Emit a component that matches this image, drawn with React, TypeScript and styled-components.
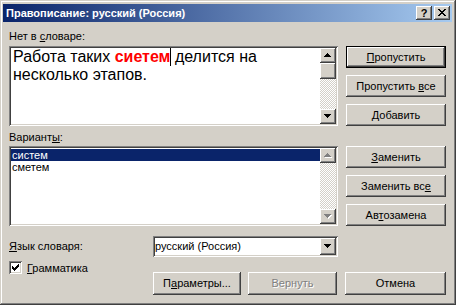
import React from 'react';
import styled, { createGlobalStyle } from 'styled-components';

const FACE = '#d4d0c8';

const raised = `box-shadow: inset -1px -1px #404040, inset 1px 1px #ffffff, inset -2px -2px #808080, inset 2px 2px ${FACE};`;
const sunken = `box-shadow: inset 1px 1px #808080, inset -1px -1px #ffffff, inset 2px 2px #404040, inset -2px -2px ${FACE};`;

const GlobalStyle = createGlobalStyle`
  html, body { margin: 0; padding: 0; background: ${FACE}; }
  * { box-sizing: border-box; }
`;

const Window = styled.div`
  width: 456px;
  height: 305px;
  background: ${FACE};
  padding: 4px 4px 4px 3px;
  box-shadow: inset -1px -1px #404040, inset 1px 1px ${FACE}, inset -2px -2px #808080, inset 2px 2px #ffffff;
  font-family: "Liberation Sans", Arial, sans-serif;
  font-size: 11px;
  color: #000;
  display: flex;
  flex-direction: column;
`;

const TitleBar = styled.div`
  height: 18px;
  flex: none;
  display: flex;
  align-items: center;
  padding: 0 2px 0 3px;
  background: linear-gradient(to right, #0a246a, #a6caf0);
  color: #fff;
  font-weight: bold;
  font-size: 11px;
`;

const TitleButtons = styled.div`
  margin-left: auto;
  display: flex;
  gap: 2px;
`;

const CaptionButton = styled.div`
  width: 16px;
  height: 14px;
  background: ${FACE};
  ${raised}
  display: flex;
  align-items: center;
  justify-content: center;
  color: #000;
  font-weight: bold;
  font-size: 11px;
  line-height: 14px;
  padding-bottom: 1px;
`;

const Content = styled.div`
  padding: 8px 0 0 6px;
`;

const TopGrid = styled.div`
  display: grid;
  grid-template-columns: 329px 100px;
  grid-template-rows: 16px 80px 20px 80px;
  column-gap: 8px;
`;

const FieldLabel = styled.div<{ $row: number; $pad: number }>`
  grid-column: 1;
  grid-row: ${p => p.$row};
  align-self: end;
  line-height: 13px;
  padding-bottom: ${p => p.$pad}px;
`;

const Key = styled.span`
  text-decoration: underline;
  text-underline-offset: 1px;
`;

const EditBox = styled.div<{ $row: number }>`
  grid-column: 1;
  grid-row: ${p => p.$row};
  background: #fff;
  ${sunken}
  padding: 2px;
  display: flex;
`;

const EditText = styled.div`
  flex: 1;
  padding: 0 2px;
  font-size: 16px;
  line-height: 18px;
  white-space: nowrap;
`;

const BadWord = styled.span`
  color: #ff0000;
  font-weight: bold;
`;

const Caret = styled.span`
  display: inline-block;
  width: 1px;
  height: 18px;
  margin-right: -1px;
  background: #000;
  vertical-align: -4px;
`;

const Scrollbar = styled.div`
  width: 16px;
  flex: none;
  display: flex;
  flex-direction: column;
`;

const ScrollArrow = styled.div`
  height: 15px;
  flex: none;
  background: ${FACE};
  ${raised}
  display: flex;
  align-items: center;
  justify-content: center;
`;

const ScrollThumb = styled.div`
  height: 16px;
  flex: none;
  background: ${FACE};
  ${raised}
`;

const ScrollTrack = styled.div`
  flex: 1;
  background: repeating-conic-gradient(#ffffff 0 25%, ${FACE} 0 50%) 0 0 / 2px 2px;
`;

const ListItems = styled.div`
  flex: 1;
  padding-top: 1px;
`;

const ListItem = styled.div<{ $selected?: boolean }>`
  height: 12px;
  line-height: 12px;
  padding-left: 1px;
  background: ${p => (p.$selected ? '#0a246a' : 'transparent')};
  color: ${p => (p.$selected ? '#fff' : '#000')};
`;

const ButtonStack = styled.div<{ $row: number }>`
  grid-column: 2;
  grid-row: ${p => p.$row};
  display: flex;
  flex-direction: column;
  gap: 7px;
`;

const Button = styled.div<{ $h?: number; $w?: number; $default?: boolean; $disabled?: boolean }>`
  height: ${p => p.$h ?? 22}px;
  width: ${p => (p.$w ? `${p.$w}px` : '100%')};
  flex: none;
  background: ${FACE};
  ${p =>
    p.$default
      ? `box-shadow: inset 0 0 0 1px #000, inset -2px -2px #404040, inset 2px 2px #ffffff, inset -3px -3px #808080;`
      : raised}
  display: flex;
  align-items: center;
  justify-content: center;
  color: ${p => (p.$disabled ? '#808080' : '#000')};
  text-shadow: ${p => (p.$disabled ? '1px 1px #ffffff' : 'none')};
  padding-bottom: 1px;
`;

const Bottom = styled.div`
  display: flex;
  margin-top: 10px;
`;

const LeftCol = styled.div`
  width: 144px;
  flex: none;
  display: flex;
  flex-direction: column;
`;

const LangLabel = styled.div`
  height: 21px;
  display: flex;
  align-items: center;
  padding-bottom: 1px;
`;

const CheckRow = styled.div`
  margin-top: 4px;
  display: flex;
  align-items: center;
  gap: 5px;
`;

const CheckBox = styled.div`
  width: 13px;
  height: 13px;
  background: #fff;
  ${sunken}
  display: flex;
  align-items: center;
  justify-content: center;
`;

const RightCol = styled.div`
  display: flex;
  flex-direction: column;
`;

const Combo = styled.div`
  width: 185px;
  height: 21px;
  background: #fff;
  ${sunken}
  padding: 2px;
  display: flex;
  align-items: center;
`;

const ComboText = styled.div`
  flex: 1;
  padding-left: 0;
  padding-bottom: 1px;
`;

const DropButton = styled.div`
  width: 16px;
  height: 17px;
  background: ${FACE};
  ${raised}
  display: flex;
  align-items: center;
  justify-content: center;
`;

const ButtonRow = styled.div`
  margin-top: 15px;
  display: flex;
`;

const Spacer = styled.div<{ $w: number }>`
  width: ${p => p.$w}px;
  flex: none;
`;

const Arrow = ({ dir, disabled }: { dir: 'up' | 'down'; disabled?: boolean }) => {
  const d =
    dir === 'up'
      ? 'M3 0h1v1h-1z M2 1h3v1h-3z M1 2h5v1h-5z M0 3h7v1h-7z'
      : 'M0 0h7v1h-7z M1 1h5v1h-5z M2 2h3v1h-3z M3 3h1v1h-1z';
  return (
    <svg width="8" height="5" viewBox="0 0 8 5" shapeRendering="crispEdges">
      {disabled && <path d={d} fill="#fff" transform="translate(1 1)" />}
      <path d={d} fill={disabled ? '#808080' : '#000'} />
    </svg>
  );
};

const CloseGlyph = () => (
  <svg width="8" height="7" viewBox="0 0 8 7" shapeRendering="crispEdges">
    <path
      d="M0 0h2v1h-2z M6 0h2v1h-2z M1 1h2v1h-2z M5 1h2v1h-2z M2 2h4v1h-4z M3 3h2v1h-2z M2 4h4v1h-4z M1 5h2v1h-2z M5 5h2v1h-2z M0 6h2v1h-2z M6 6h2v1h-2z"
      fill="#000"
    />
  </svg>
);

const CheckGlyph = () => (
  <svg width="7" height="7" viewBox="0 0 7 7" shapeRendering="crispEdges">
    <path
      d="M6 0h1v1h-1z M5 1h2v1h-2z M0 2h1v1h-1z M4 2h3v1h-3z M0 3h2v1h-2z M3 3h3v1h-3z M0 4h5v1h-5z M1 5h3v1h-3z M2 6h1v1h-1z"
      fill="#000"
    />
  </svg>
);

export default function App() {
  return (
    <>
      <GlobalStyle />
      <Window>
        <TitleBar>
          <span>Правописание: русский (Россия)</span>
          <TitleButtons>
            <CaptionButton>?</CaptionButton>
            <CaptionButton>
              <CloseGlyph />
            </CaptionButton>
          </TitleButtons>
        </TitleBar>

        <Content>
          <TopGrid>
            <FieldLabel $row={1} $pad={3}>
              Нет в <Key>с</Key>ловаре:
            </FieldLabel>
            <EditBox $row={2}>
              <EditText>
                Работа таких <BadWord>сиетем</BadWord>
                <Caret /> делится на
                <br />
                несколько этапов.
              </EditText>
              <Scrollbar>
                <ScrollArrow>
                  <Arrow dir="up" />
                </ScrollArrow>
                <ScrollThumb />
                <ScrollTrack />
                <ScrollArrow>
                  <Arrow dir="down" />
                </ScrollArrow>
              </Scrollbar>
            </EditBox>
            <ButtonStack $row={2}>
              <Button $default>
                <span><Key>П</Key>ропустить</span>
              </Button>
              <Button>
                <span>Пропустить <Key>в</Key>се</span>
              </Button>
              <Button>
                <span><Key>Д</Key>обавить</span>
              </Button>
            </ButtonStack>

            <FieldLabel $row={3} $pad={2}>
              Вариант<Key>ы</Key>:
            </FieldLabel>
            <EditBox $row={4}>
              <ListItems>
                <ListItem $selected>систем</ListItem>
                <ListItem>сметем</ListItem>
              </ListItems>
              <Scrollbar>
                <ScrollArrow>
                  <Arrow dir="up" disabled />
                </ScrollArrow>
                <ScrollTrack />
                <ScrollArrow>
                  <Arrow dir="down" disabled />
                </ScrollArrow>
              </Scrollbar>
            </EditBox>
            <ButtonStack $row={4}>
              <Button>
                <span><Key>З</Key>аменить</span>
              </Button>
              <Button>
                <span>Заменить вс<Key>е</Key></span>
              </Button>
              <Button>
                <span>Ав<Key>т</Key>озамена</span>
              </Button>
            </ButtonStack>
          </TopGrid>

          <Bottom>
            <LeftCol>
              <LangLabel>
                <span><Key>Я</Key>зык словаря:</span>
              </LangLabel>
              <CheckRow>
                <CheckBox>
                  <CheckGlyph />
                </CheckBox>
                <span><Key>Г</Key>рамматика</span>
              </CheckRow>
            </LeftCol>
            <RightCol>
              <Combo>
                <ComboText>русский (Россия)</ComboText>
                <DropButton>
                  <Arrow dir="down" />
                </DropButton>
              </Combo>
              <ButtonRow>
                <Button $h={23} $w={88}>
                  <span>П<Key>а</Key>раметры...</span>
                </Button>
                <Spacer $w={7} />
                <Button $h={23} $w={89} $disabled>
                  Вернуть
                </Button>
                <Spacer $w={8} />
                <Button $h={23} $w={101}>
                  Отмена
                </Button>
              </ButtonRow>
            </RightCol>
          </Bottom>
        </Content>
      </Window>
    </>
  );
}
